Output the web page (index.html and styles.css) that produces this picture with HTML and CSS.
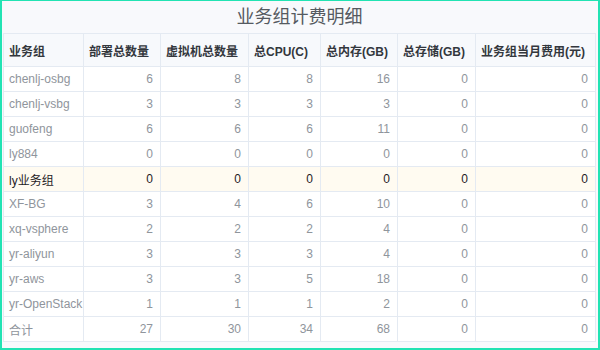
FILE: index.html
```html
<!DOCTYPE html>
<html lang="zh">
<head>
<meta charset="utf-8">
<link rel="stylesheet" href="styles.css">
</head>
<body>
<div class="frame">
  <h1 class="title">业务组计费明细</h1>
  <table class="grid">
    <colgroup>
      <col class="c1"><col class="c2"><col class="c3"><col class="c4"><col class="c5"><col class="c6"><col class="c7">
    </colgroup>
    <thead>
      <tr><th>业务组</th><th>部署总数量</th><th>虚拟机总数量</th><th>总CPU(C)</th><th>总内存(GB)</th><th>总存储(GB)</th><th>业务组当月费用(元)</th></tr>
    </thead>
    <tbody>
      <tr><td>chenlj-osbg</td><td>6</td><td>8</td><td>8</td><td>16</td><td>0</td><td>0</td></tr>
      <tr><td>chenlj-vsbg</td><td>3</td><td>3</td><td>3</td><td>3</td><td>0</td><td>0</td></tr>
      <tr><td>guofeng</td><td>6</td><td>6</td><td>6</td><td>11</td><td>0</td><td>0</td></tr>
      <tr><td>ly884</td><td>0</td><td>0</td><td>0</td><td>0</td><td>0</td><td>0</td></tr>
      <tr class="hl"><td>ly业务组</td><td>0</td><td>0</td><td>0</td><td>0</td><td>0</td><td>0</td></tr>
      <tr><td>XF-BG</td><td>3</td><td>4</td><td>6</td><td>10</td><td>0</td><td>0</td></tr>
      <tr><td>xq-vsphere</td><td>2</td><td>2</td><td>2</td><td>4</td><td>0</td><td>0</td></tr>
      <tr><td>yr-aliyun</td><td>3</td><td>3</td><td>3</td><td>4</td><td>0</td><td>0</td></tr>
      <tr><td>yr-aws</td><td>3</td><td>3</td><td>5</td><td>18</td><td>0</td><td>0</td></tr>
      <tr><td>yr-OpenStack</td><td>1</td><td>1</td><td>1</td><td>2</td><td>0</td><td>0</td></tr>
      <tr><td>合计</td><td>27</td><td>30</td><td>34</td><td>68</td><td>0</td><td>0</td></tr>
    </tbody>
  </table>
</div>
</body>
</html>
```
FILE: styles.css
```css
html, body {
  margin: 0;
  padding: 0;
}
body {
  font-family: "Liberation Sans", "Noto Sans CJK SC", sans-serif;
}
.frame {
  box-sizing: border-box;
  width: 600px;
  height: 350px;
  border: 2px solid #22e3b3;
  border-top-width: 1px;
  background: #f8f9fc;
  padding: 0 2px 0 1px;
}
.title {
  margin: 0;
  height: 32px;
  line-height: 32px;
  text-align: center;
  font-size: 18px;
  font-weight: normal;
  color: #555a61;
}
.grid {
  width: 592px;
  border-collapse: collapse;
  table-layout: fixed;
  font-size: 12px;
}
.c1 { width: 80px; }
.c2 { width: 77px; }
.c3 { width: 88px; }
.c4 { width: 72px; }
.c5 { width: 77px; }
.c6 { width: 78px; }
.c7 { width: 120px; }
.grid th, .grid td {
  border: 1px solid #e4eaf2;
  padding: 0 7px 0 5px;
  white-space: nowrap;
  overflow: hidden;
}
.grid th {
  height: 32px;
  text-align: left;
  font-weight: bold;
  color: #33373d;
  background: #f7f9fc;
}
.grid td {
  height: 24px;
  text-align: right;
  color: #8f959c;
  background: #fff;
}
.grid td:first-child {
  text-align: left;
}
.grid tr.hl td {
  background: #fffbf1;
  color: #1f2226;
}
```
